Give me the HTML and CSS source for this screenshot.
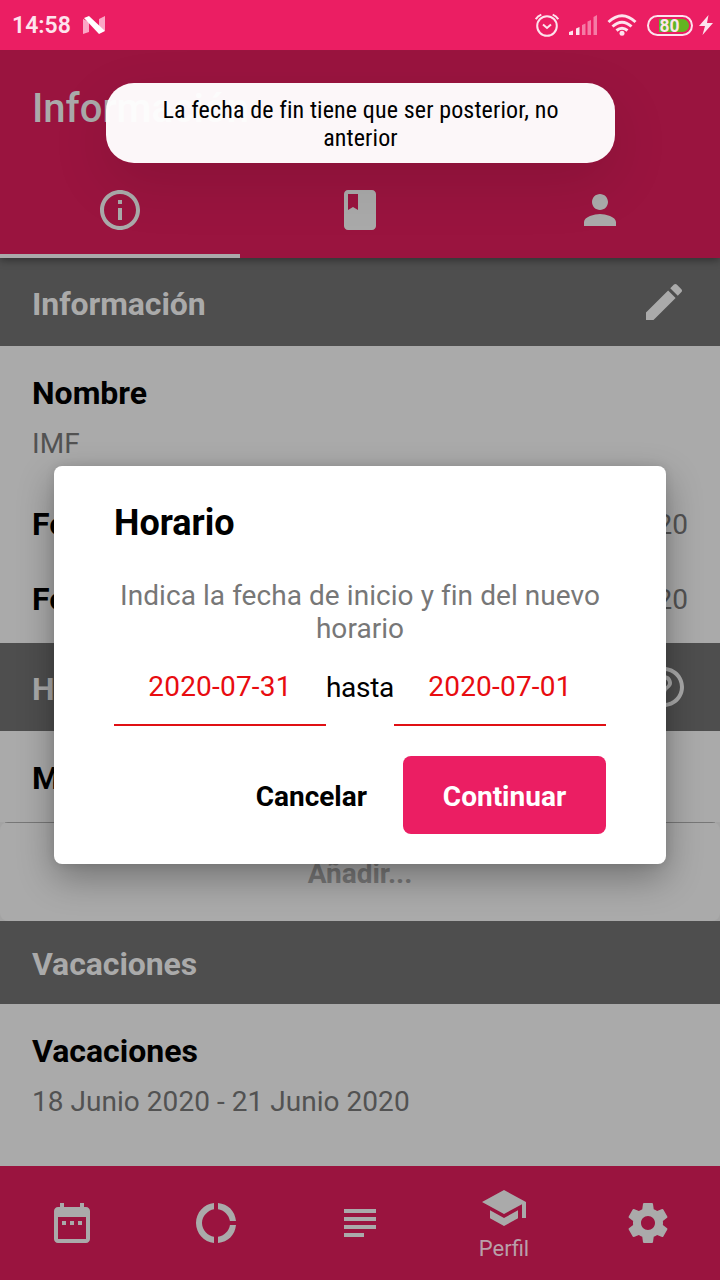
FILE: index.html
```html
<!DOCTYPE html>
<html lang="es">
<head>
<meta charset="utf-8">
<title>Información</title>
<link rel="stylesheet" href="styles.css">
</head>
<body>
<div class="screen">
  <div class="status">
    <span class="clock">14:58</span>
    <svg class="n-logo" width="22" height="18" viewBox="0 0 22 18"><path d="M0 3L6 6V16L0 18ZM16 3L22 0V15L16 12Z" fill="#fba6c5"/><path d="M1 2L6 0L22 15L16 18Z" fill="#fff"/></svg>
    <div class="status-icons">
      <svg width="24" height="24" viewBox="0 0 24 24" fill="none" stroke="#fde3ed" stroke-width="2"><circle cx="12" cy="13" r="9.8"/><path d="M8 11.5L12 15L16 11.5"/><path d="M.8 6.2Q2.5 3 6.3 1.6M23.2 6.2Q21.500 3 17.700 1.600"/></svg>
      <svg width="28" height="20" viewBox="0 0 28 20"><path d="M0 20V17L4 15.500V20ZM7 20V13.500L10.500 12V20Z" fill="#fde3ed"/><path d="M13 20V10L16.500 8.500V20ZM18.500 20V6.500L22 5V20ZM24.500 20V2L28 0V20Z" fill="#f57ba5"/></svg>
      <svg width="30" height="22" viewBox="0 0 30 22" fill="none" stroke="#fde3ed" stroke-width="3"><path d="M1.500 8Q15-4.500 28.500 8M5.500 12.500Q15 4 24.500 12.500M9.500 16.500Q15 12 20.500 16.500"/><circle cx="15" cy="19.300" r="2.500" fill="#fde3ed" stroke="none"/></svg>
      <div class="battery"><span class="level">80</span></div>
      <svg class="bolt" width="14" height="20" viewBox="0 0 14 20"><path d="M9.500 0L0 11H6L3.500 20L14 8H8Z" fill="#fde3ed"/></svg>
    </div>
  </div>

  <header class="appbar">
    <h1 class="page-title">Información</h1>
    <nav class="tabs">
      <div class="tab tab-active"><svg class="icon" viewBox="0 0 24 24"><path d="M11 17h2v-6h-2v6zm1-15C6.480 2 2 6.480 2 12s4.480 10 10 10 10-4.480 10-10S17.520 2 12 2zm0 18c-4.410 0-8-3.590-8-8s3.590-8 8-8 8 3.590 8 8-3.590 8-8 8zM11 9h2V7h-2v2z"/></svg></div>
      <div class="tab"><svg class="icon" viewBox="0 0 24 24"><path d="M18 2H6c-1.100 0-2 .9-2 2v16c0 1.100.9 2 2 2h12c1.100 0 2-.9 2-2V4c0-1.100-.9-2-2-2zM6 4h5v8l-2.500-1.500L6 12V4z"/></svg></div>
      <div class="tab"><svg class="icon" viewBox="0 0 24 24"><path d="M12 12c2.210 0 4-1.790 4-4s-1.790-4-4-4-4 1.790-4 4 1.790 4 4 4zm0 2c-2.670 0-8 1.340-8 4v2h16v-2c0-2.660-5.330-4-8-4z"/></svg></div>
    </nav>
  </header>

  <main class="content">
    <div class="section">
      <h2 class="section-title">Información</h2>
      <svg class="icon" viewBox="0 0 24 24"><path d="M3 17.250V21h3.750L17.810 9.940l-3.750-3.750L3 17.250zM20.710 7.040c.39-.39.39-1.020 0-1.410l-2.340-2.340c-.39-.39-1.020-.39-1.410 0l-1.830 1.830 3.750 3.750 1.830-1.830z"/></svg>
    </div>
    <div class="info">
      <div class="label">Nombre</div>
      <div class="value">IMF</div>
      <div class="row row-first"><span class="label">Fecha</span><span class="value">2020</span></div>
      <div class="row"><span class="label">Fecha</span><span class="value">2020</span></div>
    </div>
    <div class="section">
      <h2 class="section-title">Horario</h2>
      <svg class="icon" viewBox="0 0 24 24"><path d="M11 18h2v-2h-2v2zm1-16C6.480 2 2 6.480 2 12s4.480 10 10 10 10-4.480 10-10S17.520 2 12 2zm0 18c-4.410 0-8-3.590-8-8s3.590-8 8-8 8 3.590 8 8-3.590 8-8 8zm0-14c-2.210 0-4 1.790-4 4h2c0-1.100.9-2 2-2s2 .9 2 2c0 2-3 1.750-3 5h2c0-2.250 3-2.500 3-5 0-2.210-1.790-4-4-4z"/></svg>
    </div>
    <div class="schedule label">Mañana</div>
    <div class="add-wrap"><div class="add">Añadir...</div></div>
    <div class="section section-short"><h2 class="section-title">Vacaciones</h2></div>
    <div class="holidays">
      <div class="label">Vacaciones</div>
      <div class="value">18 Junio 2020 - 21 Junio 2020</div>
    </div>
  </main>

  <nav class="bottom">
    <div class="item"><svg class="icon" viewBox="0 0 24 24"><path d="M9 11H7v2h2v-2zm4 0h-2v2h2v-2zm4 0h-2v2h2v-2zm2-7h-1V2h-2v2H8V2H6v2H5c-1.110 0-1.990.9-1.990 2L3 20c0 1.100.89 2 2 2h14c1.100 0 2-.9 2-2V6c0-1.100-.9-2-2-2zm0 16H5V9h14v11z"/></svg></div>
    <div class="item"><svg class="icon" viewBox="0 0 24 24"><path d="M11 5.080V2c-5 .5-9 4.810-9 10s4 9.500 9 10v-3.080c-3-.48-6-3.400-6-6.920s3-6.440 6-6.920zM18.970 11H22c-.47-5-4-8.530-9-9v3.080C16 5.510 18.540 8 18.970 11zM13 18.920V22c5-.47 8.530-4 9-9h-3.030c-.43 3-2.970 5.490-5.970 5.920z"/></svg></div>
    <div class="item"><svg class="icon" viewBox="0 0 24 24"><path d="M14 17H4v2h10v-2zm6-8H4v2h16V9zM4 15h16v-2H4v2zM4 5v2h16V5H4z"/></svg></div>
    <div class="item item-active"><svg class="icon" viewBox="0 0 24 24"><path d="M5 13.180v4L12 21l7-3.820v-4L12 17l-7-3.820zM12 3L1 9l11 6 9-4.910V17h2V9L12 3z"/></svg><span class="item-label">Perfil</span></div>
    <div class="item"><svg class="icon" viewBox="0 0 24 24"><path d="M19.430 12.980c.04-.32.07-.64.07-.98s-.03-.66-.07-.98l2.110-1.650c.19-.15.24-.42.12-.64l-2-3.460c-.12-.22-.39-.3-.61-.22l-2.490 1c-.52-.4-1.080-.73-1.690-.98l-.38-2.650C14.460 2.180 14.250 2 14 2h-4c-.25 0-.46.18-.49.42l-.38 2.650c-.61.25-1.170.59-1.690.98l-2.490-1c-.23-.09-.49 0-.61.22l-2 3.460c-.13.22-.07.49.12.64l2.110 1.650c-.04.32-.07.65-.07.98s.03.66.07.98l-2.110 1.650c-.19.15-.24.42-.12.64l2 3.460c.12.22.39.3.61.22l2.490-1c.52.4 1.080.73 1.690.98l.38 2.650c.03.24.24.42.49.42h4c.25 0 .46-.18.49-.42l.38-2.650c.61-.25 1.170-.59 1.690-.98l2.490 1c.23.09.49 0 .61-.22l2-3.460c.12-.22.07-.49-.12-.64l-2.110-1.650zM12 15.500c-1.930 0-3.500-1.570-3.500-3.500s1.570-3.500 3.500-3.500 3.500 1.570 3.500 3.500-1.570 3.500-3.500 3.500z"/></svg></div>
  </nav>

  <section class="dialog">
    <h2 class="dialog-title">Horario</h2>
    <p class="dialog-text">Indica la fecha de inicio y fin del nuevo horario</p>
    <div class="dates">
      <div class="date">2020-07-31</div>
      <div class="until">hasta</div>
      <div class="date">2020-07-01</div>
    </div>
    <div class="actions">
      <div class="cancel">Cancelar</div>
      <div class="confirm">Continuar</div>
    </div>
  </section>

  <div class="toast"><div class="toast-text">La fecha de fin tiene que ser posterior, no<br>anterior</div></div>
</div>
</body>
</html>
```
FILE: styles.css
```css
* { box-sizing: border-box; }
body { margin: 0; font-family: Roboto, "Noto Sans", sans-serif; }
h1, h2, p { margin: 0; }
svg { display: block; flex: none; }

.screen {
  position: relative;
  display: flex;
  flex-direction: column;
  width: 720px;
  height: 1280px;
  overflow: hidden;
  background: #aaa;
}

.status {
  position: relative;
  z-index: 1;
  display: flex;
  align-items: center;
  height: 50px;
  padding: 0 7px 0 12px;
  background: #eb1e63;
  color: #fde3ed;
}
.clock { width: 58px; font-size: 23px; font-weight: 600; line-height: 28px; white-space: nowrap; padding-top: 2px; }
.n-logo { margin-left: 13px; }
.status-icons { display: flex; align-items: center; gap: 10px; margin-left: auto; }
.battery {
  width: 46px;
  height: 21px;
  padding: 2px;
  border: 2px solid #fde3ed;
  border-radius: 11px;
  display: flex;
  justify-content: center;
}
.level {
  width: 100%;
  border-radius: 7px;
  background: linear-gradient(90deg, transparent 8px, #62b422 8px);
  color: #fde3ed;
  font-size: 17.500px;
  font-weight: 700;
  line-height: 14px;
  text-align: center;
  padding-right: 1px;
}
.bolt { margin-left: -4px; }

.icon { width: 48px; height: 48px; fill: #aaa; }

.appbar {
  position: relative;
  height: 208px;
  background: #9a143f;
  box-shadow: 0 2px 8px rgba(0, 0, 0, .4);
}
.page-title { height: 112px; padding: 35px 32px 0; font-size: 40px; font-weight: 500; line-height: 47px; color: #aaa; }
.tabs { display: grid; grid-template-columns: repeat(3, 1fr); height: 96px; }
.tab { display: flex; align-items: center; justify-content: center; border-bottom: 4px solid transparent; padding-top: 4px; }
.tab-active { border-color: #aaa; }

.content { flex: 1; }
.section {
  display: flex;
  align-items: center;
  justify-content: space-between;
  height: 88px;
  padding: 0 32px;
  background: #4e4e4e;
}
.section-short { height: 83px; }
.section-title { padding-top: 4px; font-size: 32px; font-weight: 700; line-height: 38px; letter-spacing: -.08px; color: #aaa; }
.section-short .section-title { padding-top: 2px; }
.label { font-size: 32px; font-weight: 700; line-height: 38px; color: #000; }
.value { font-size: 28px; line-height: 33px; letter-spacing: .04px; color: #525252; }
.info { height: 297px; padding: 28px 32px 0; }
.info > .value { margin-top: 15px; }
.row { display: flex; justify-content: space-between; align-items: flex-start; height: 38px; margin-top: 37px; }
.row .value { padding-top: 3px; }
.row-first { margin-top: 45px; }
.schedule { height: 91px; padding: 28px 32px 0; }
.add-wrap { background: #a3a3a3; }
.add {
  height: 99px;
  padding-top: 35px;
  border-radius: 8px;
  background: linear-gradient(#777, #777) 5px 0 / 710px 1px no-repeat #aaa;
  color: #777;
  font-size: 28px;
  font-weight: 700;
  line-height: 33px;
  text-align: center;
}
.holidays { padding: 28px 32px 0; }
.holidays .value { margin-top: 15px; }

.bottom { display: grid; grid-template-columns: repeat(5, 1fr); height: 114px; background: #9a143f; }
.item { display: flex; flex-direction: column; align-items: center; padding-top: 33px; }
.item-active { padding-top: 18px; }
.item-label { margin-top: 4px; font-size: 22px; line-height: 26px; color: #b9a0aa; }

.dialog {
  position: absolute;
  left: 54px;
  top: 466px;
  width: 612px;
  height: 398px;
  padding: 36px 60px 0;
  border-radius: 8px;
  background: #fff;
  box-shadow: 0 14px 36px rgba(0, 0, 0, .32), 0 0 10px rgba(0, 0, 0, .1);
}
.dialog-title { font-size: 36px; font-weight: 700; line-height: 42px; }
.dialog-text { margin-top: 35px; font-size: 28px; line-height: 33px; letter-spacing: .06px; text-align: center; color: #777; }
.dates { display: flex; height: 81px; font-size: 28px; line-height: 33px; }
.date { flex: 1; padding-top: 25px; border-bottom: 2px solid #e01014; letter-spacing: .2px; color: #e80c10; text-align: center; }
.until { width: 68px; padding-top: 26px; letter-spacing: -.3px; text-align: center; white-space: nowrap; }
.actions { display: flex; justify-content: flex-end; align-items: center; gap: 36px; margin-top: 30px; font-size: 28px; font-weight: 700; line-height: 33px; }
.confirm { display: flex; align-items: center; justify-content: center; width: 203px; height: 78px; padding-top: 2px; border-radius: 8px; background: #eb1e63; color: #fff; }
.cancel { padding-top: 2px; }

.toast {
  position: absolute;
  left: 106px;
  top: 83px;
  width: 509px;
  height: 80px;
  padding-top: 13px;
  display: flex;
  justify-content: center;
  border-radius: 28px;
  background: rgba(255, 255, 255, .97);
  box-shadow: 0 20px 60px rgba(0, 0, 0, .11);
}
.toast-text { flex: none; font-family: "Roboto Condensed", Roboto, sans-serif; font-size: 24px; line-height: 28px; letter-spacing: .12px; text-align: center; }
```
